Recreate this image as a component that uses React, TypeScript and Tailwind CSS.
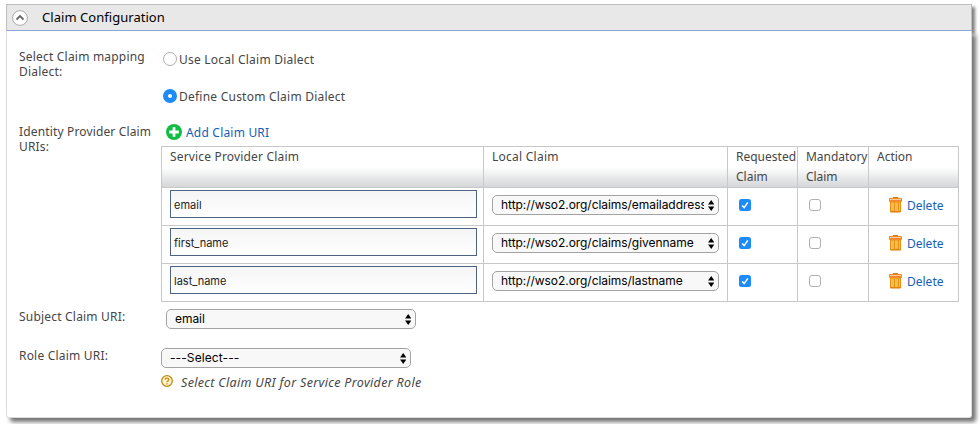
import React from "react";

const sans = "font-['Noto_Sans',sans-serif]";
const ui = "font-[Inter,sans-serif]";

function Arrows() {
  return (
    <svg width="6.5" height="11" viewBox="0 0 6.5 11" className="ml-auto shrink-0">
      <path d="M3.25 0 6.5 4.6H0zM3.25 11 0 6.4h6.5z" fill="#000" />
    </svg>
  );
}

function Select({ value, width, spacing }: { value: string; width: string; spacing: string }) {
  return (
    <div className={`${width} ${ui} flex h-5 items-center rounded-[5px] border border-[#a3a3a3] bg-[#f8f8f8] pr-[4px] pl-2 text-[12px] leading-[18px] text-black`}>
      <span className={`overflow-hidden whitespace-nowrap ${spacing}`}>{value}</span>
      <span className="w-1 shrink-0" />
      <Arrows />
    </div>
  );
}

function Check({ on }: { on?: boolean }) {
  return on ? (
    <svg width="12" height="12" viewBox="0 0 12 12">
      <rect width="12" height="12" rx="2.5" fill="#1e8bfb" />
      <path d="M3.2 6.4 5.2 8.6 8.8 3.4" fill="none" stroke="#fff" strokeWidth="1.5" />
    </svg>
  ) : (
    <div className="size-3 rounded-[3px] border border-[#b0b0b0] bg-white" />
  );
}

function Trash() {
  return (
    <svg width="13" height="17" viewBox="0 0 13 17">
      <path d="M4 1h5v2H4z" fill="#d9790f" />
      <rect x="0" y="2" width="13" height="4" rx="0.8" fill="#f58a2a" />
      <path d="M1 3.5h11" stroke="#ffc795" />
      <path d="M1 6h11v10H1z" fill="#e8920f" />
      <path d="M2.5 6.5v8.5M6.5 6.5v8.5M10.5 6.5v8.5" stroke="#fbc04a" />
      <path d="M4 6.5v8.5M8 6.5v8.5" stroke="#ffe39a" />
      <path d="M1.5 16h10" stroke="#d97706" />
    </svg>
  );
}

const claims = [
  { name: "email", uri: "http://wso2.org/claims/emailaddress" },
  { name: "first_name", uri: "http://wso2.org/claims/givenname" },
  { name: "last_name", uri: "http://wso2.org/claims/lastname" },
];

const cols = "grid grid-cols-[322px_244px_70px_71px_90px]";
const head = "border-r border-[#c8c8c8] bg-linear-to-b from-white from-50% to-[#d4d6d8] pl-2 leading-5";
const cell = "border-r border-[#c8c8c8]";

export default function App() {
  return (
    <div className={`${sans} h-[424px] w-[980px] overflow-hidden bg-white pt-1 pl-1.5 text-[12px] leading-[15px] text-[#464646]`}>
      <div className="w-[966px]">
        <header className="relative flex h-[27px] items-center border border-[#bdbdbd] border-b-[#8fa9d8] bg-[#e8e8e8] pl-[5px] shadow-[3px_3px_3px_rgba(0,0,0,0.5)]">
          <svg width="16" height="16" viewBox="0 0 16 16">
            <circle cx="8" cy="8" r="7.4" fill="#fff" stroke="#aaa" />
            <path d="M4.5 9.5 8 6l3.5 3.5" fill="none" stroke="#666" strokeWidth="1.8" />
          </svg>
          <h1 className="ml-3.5 text-[13px] tracking-[0.04px] text-black">Claim Configuration</h1>
        </header>
        <main className="relative h-[387px] rounded-b-[3px] border border-t-0 border-[#d9dcdf] bg-white pt-[18px] pl-3 shadow-[4px_4px_4px_rgba(0,0,0,0.55)]">
          <div className="flex h-[75px]">
            <div className="w-[144px] tracking-[0.2px]">Select Claim mapping<br />Dialect:</div>
            <div>
              <div className="flex h-5 items-center gap-0.5">
                <span className="size-3.5 rounded-full border border-[#adadad] bg-white" />
                <span className="tracking-[0.23px]">Use Local Claim Dialect</span>
              </div>
              <div className="mt-[17px] flex h-5 items-center gap-0.5">
                <span className="flex size-3.5 items-center justify-center rounded-full bg-[#1e8bfb]">
                  <span className="size-1 rounded-full bg-white" />
                </span>
                <span className="tracking-[0.23px]">Define Custom Claim Dialect</span>
              </div>
            </div>
          </div>
          <div className="flex h-[185px]">
            <div className="w-[142px] tracking-[0.15px]">Identity Provider Claim<br />URIs:</div>
            <div className="w-[798px]">
              <div className="flex h-[22px] items-start gap-1 pl-[5px] text-[#1360b8]">
                <svg width="16" height="16" viewBox="0 0 16 16">
                  <circle cx="8" cy="8" r="8" fill="#11bd45" />
                  <path d="M8 3.2v9.6M3.2 8h9.6" stroke="#fff" strokeWidth="2.8" />
                </svg>
                <span className="pt-px tracking-[0.2px]">Add Claim URI</span>
              </div>
              <div className="border-t border-l border-[#c8c8c8]">
                <div className={`${cols} h-[41px] border-b border-[#c8c8c8]`}>
                  <div className={`${head} tracking-[0.17px]`}>Service Provider Claim</div>
                  <div className={`${head} tracking-[0.25px]`}>Local Claim</div>
                  <div className={head}>Requested Claim</div>
                  <div className={`${head} tracking-[-0.05px]`}>Mandatory Claim</div>
                  <div className={head}>Action</div>
                </div>
                {claims.map((c) => (
                  <div key={c.name} className={`${cols} h-[38px] border-b border-[#c8c8c8]`}>
                    <div className={`${cell} pt-0.5 pl-2`}>
                      <div className={`${ui} flex h-7 w-[307px] items-center border border-[#4f6482] bg-linear-to-b from-[#f5f5f5] to-white pt-0.5 pl-[3px] text-[11px] text-[#222]`}>{c.name}</div>
                    </div>
                    <div className={`${cell} pt-[7px] pl-2`}><Select value={c.uri} width="w-[227px]" spacing="tracking-[-0.05px]" /></div>
                    <div className={`${cell} pt-[11px] pl-[11px]`}><Check on /></div>
                    <div className={`${cell} pt-[11px] pl-[11px]`}><Check /></div>
                    <div className={`${cell} flex items-start gap-[5px] pt-2 pl-5 text-[#1360b8]`}>
                      <Trash /><span className="pt-0.5">Delete</span>
                    </div>
                  </div>
                ))}
              </div>
            </div>
          </div>
          <div className="flex h-[39px]">
            <div className="w-[147px] tracking-[0.2px]">Subject Claim URI:</div>
            <Select value="email" width="w-[250px]" spacing="tracking-[-0.05px]" />
          </div>
          <div className="flex">
            <div className="w-[142px] tracking-[0.2px]">Role Claim URI:</div>
            <div>
              <Select value="---Select---" width="w-[250px]" spacing="tracking-[0.1px]" />
              <div className="flex gap-2 pt-[7px]">
                <svg width="12" height="12" viewBox="0 0 12 12">
                  <circle cx="6" cy="6" r="5.3" fill="#fff6cf" stroke="#bd8b16" strokeWidth="1.3" />
                  <path d="M4.2 4.7C4.2 2.6 7.8 2.6 7.8 4.7 7.8 6 6 5.8 6 7.3M6 8.2v1.3" fill="none" stroke="#d8860b" strokeWidth="1.3" />
                </svg>
                <em className="text-[12.5px] tracking-[0.32px] whitespace-nowrap">Select Claim URI for Service Provider Role</em>
              </div>
            </div>
          </div>
        </main>
      </div>
    </div>
  );
}
